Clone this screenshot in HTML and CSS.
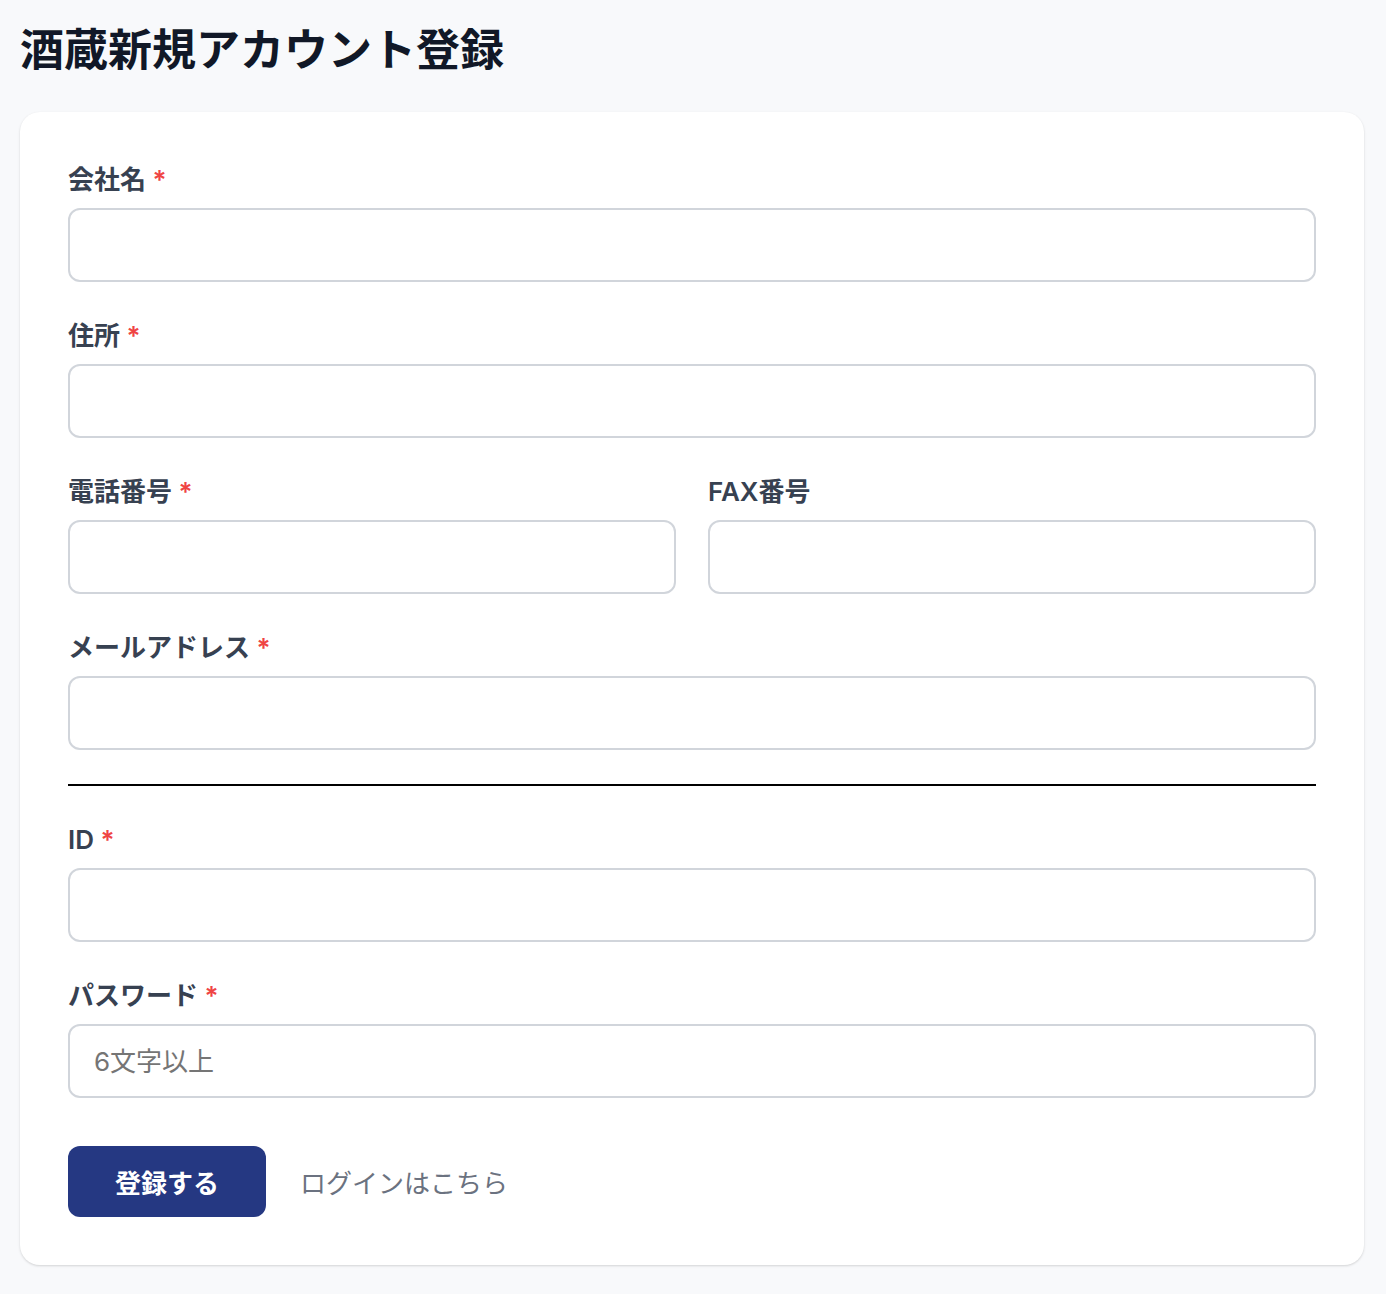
FILE: index.html
```html
<!DOCTYPE html>
<html lang="ja">
  <head>
    <meta charset="UTF-8" />
    <meta name="viewport" content="width=device-width, initial-scale=1.0" />
    <title>酒蔵新規アカウント登録</title>
    <link rel="stylesheet" href="styles.css">
  </head>
  <body>
    <h1 class="page-title">酒蔵新規アカウント登録</h1>

    <form class="card" onsubmit="return false;">
      <div class="field">
        <label for="company" class="field-label">会社名 <span class="required">*</span></label>
        <input type="text" id="company" />
      </div>

      <div class="field">
        <label for="address" class="field-label">住所 <span class="required">*</span></label>
        <input type="text" id="address" />
      </div>

      <div class="field-row">
        <div class="field">
          <label for="tel" class="field-label">電話番号 <span class="required">*</span></label>
          <input type="tel" id="tel" />
        </div>
        <div class="field">
          <label for="fax" class="field-label">FAX番号</label>
          <input type="tel" id="fax" />
        </div>
      </div>

      <div class="field">
        <label for="email" class="field-label">メールアドレス <span class="required">*</span></label>
        <input type="email" id="email" />
      </div>

      <hr class="divider" />

      <div class="field">
        <label for="login-id" class="field-label">ID <span class="required">*</span></label>
        <input type="text" id="login-id" />
      </div>

      <div class="field">
        <label for="password" class="field-label">パスワード <span class="required">*</span></label>
        <input type="password" id="password" placeholder="6文字以上" />
      </div>

      <div class="actions">
        <button type="submit" class="btn-submit">登録する</button>
        <a href="#" class="login-link">ログインはこちら</a>
      </div>
    </form>
  </body>
</html>
```

FILE: styles.css
```css
:root {
  --bg: #f8f9fb;
  --text: #111827;
  --label: #374151;
  --muted: #6b7280;
  --border: #d1d5db;
  --danger: #ef4444;
  --primary: #253882;
}

* {
  box-sizing: border-box;
  margin: 0;
  padding: 0;
}

body {
  font-family: "Inter", "Noto Sans CJK JP", sans-serif;
  background: var(--bg);
  color: var(--text);
  padding: 20px 22px 28px 20px;
}

.page-title {
  font-size: 44px;
  font-weight: 700;
  line-height: 60px;
  margin-bottom: 32px;
  color: var(--text);
}

.card {
  background: white;
  border-radius: 20px;
  box-shadow: 0 1px 3px rgba(0, 0, 0, 0.1), 0 1px 2px rgba(0, 0, 0, 0.06);
  padding: 48px;
  display: flex;
  flex-direction: column;
  gap: 34px;
}

.field {
  display: flex;
  flex-direction: column;
}

.field-label {
  font-size: 26px;
  font-weight: 600;
  line-height: 40px;
  margin-bottom: 8px;
  color: var(--label);
}

.required {
  color: var(--danger);
}

input {
  width: 100%;
  height: 74px;
  padding: 0 24px;
  border: 2px solid var(--border);
  border-radius: 12px;
  font-family: "Inter", "Noto Sans CJK JP", sans-serif;
  font-size: 26px;
  color: var(--text);
  background: white;
}

input::placeholder {
  color: #757575;
}

input:focus {
  outline: none;
  border-color: var(--primary);
}

.field-row {
  display: grid;
  grid-template-columns: 1fr 1fr;
  gap: 32px;
}

.divider {
  border: none;
  border-top: 2px solid #000;
  height: 0;
}

.actions {
  display: flex;
  align-items: center;
  gap: 34px;
  margin-top: 14px;
}

.btn-submit {
  width: 198px;
  height: 71px;
  border: none;
  border-radius: 12px;
  background: var(--primary);
  color: white;
  font-family: "Inter", "Noto Sans CJK JP", sans-serif;
  font-size: 26px;
  font-weight: 700;
  cursor: pointer;
}

.login-link {
  font-size: 26px;
  color: var(--muted);
  text-decoration: none;
}
```
